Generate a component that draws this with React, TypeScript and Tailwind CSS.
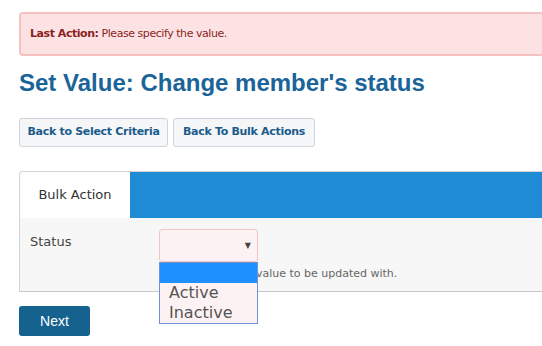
const tahoma = { fontFamily: '"DejaVu Sans", Verdana, sans-serif' };

function Alert() {
  return (
    <div className="flex h-[44px] items-center rounded-[4px] border-2 border-[#f7c1c1] bg-[#fde2e3] pl-[9px] text-[11px] text-[#8a1f1f] [letter-spacing:-0.45px]">
      <span className="font-bold">Last Action:</span>
      <span className="ml-[3px]">Please specify the value.</span>
    </div>
  );
}

function StatusSelect() {
  return (
    <div className="relative w-[99px]">
      <div className="flex h-[33px] items-center justify-end rounded-[3px] border border-[#f5c4c4] bg-[#fdf2f3] pr-[6px]">
        <span className="text-[8px] leading-none text-[#444]">▼</span>
      </div>
      <div className="absolute left-0 top-[33px] z-10 w-[99px] border border-[#7092d6] bg-[#fdf2f3]">
        <div className="h-[20px] bg-[#1e90ff]" />
        <div className="pl-[9px] text-[16px] leading-[20px] text-[#555]">Active</div>
        <div className="pl-[9px] text-[16px] leading-[20px] text-[#555]">Inactive</div>
      </div>
    </div>
  );
}

export default function App() {
  return (
    <div className="h-[346px] w-[542px] overflow-hidden bg-white" style={tahoma}>
      <div className="w-[600px] pl-[19px] pt-[12px]">
        <Alert />
        <h1
          className="mt-[12px] text-[24px] font-bold leading-[30px] text-[#1b6499]"
          style={{ fontFamily: '"Liberation Sans", Arial, sans-serif' }}
        >
          Set Value: Change member's status
        </h1>
        <div className="mt-[20px] flex gap-[5px]">
          <button className="h-[29px] w-[149px] rounded-[3px] border border-[#cdd4dc] bg-[#f5f6f7] text-[11px] font-bold text-[#1a5b8c] [letter-spacing:-0.3px]">
            Back to Select Criteria
          </button>
          <button className="h-[29px] w-[142px] rounded-[3px] border border-[#cdd4dc] bg-[#f5f6f7] text-[11px] font-bold text-[#1a5b8c] [letter-spacing:-0.3px]">
            Back To Bulk Actions
          </button>
        </div>
        <div className="mt-[24px] rounded-tl-[4px] border-b border-l border-t border-[#d4d4d4] border-b-[#c8c8c8] bg-[#f7f7f7]">
          <div className="flex h-[46px]">
            <div className="flex w-[110px] items-center justify-center rounded-tl-[4px] bg-white text-[13px] text-[#333]">
              Bulk Action
            </div>
            <div className="flex-1 bg-[#1e8bd4]" />
          </div>
          <div className="flex px-[10px] pb-[9px] pt-[11px]">
            <div className="w-[129px] pt-[5px] text-[13px] leading-[16px] text-[#444]">Status</div>
            <div>
              <StatusSelect />
              <div className="mt-[4px] text-[11px] leading-[16px] text-[#666]">
                Please select the value to be updated with.
              </div>
            </div>
          </div>
        </div>
        <button
          className="mt-[14px] h-[30px] w-[71px] rounded-[3px] bg-[#16628f] text-[14px] text-white"
          style={{ fontFamily: '"Liberation Sans", Arial, sans-serif' }}
        >
          Next
        </button>
      </div>
    </div>
  );
}
